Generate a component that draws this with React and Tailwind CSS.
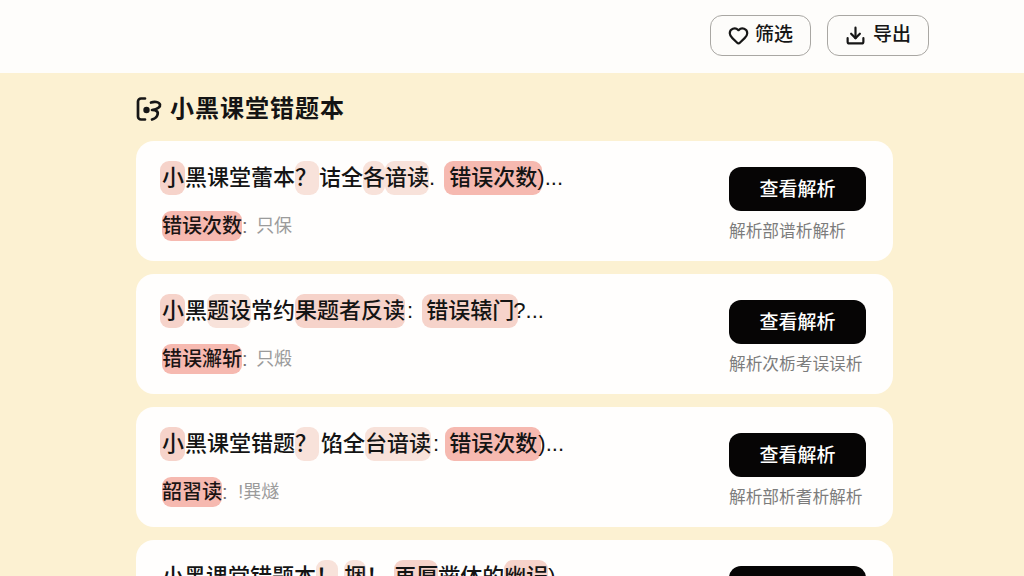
import React from 'react';
import { Heart, Download } from 'lucide-react';

const STRONG = 'bg-[#f6b9b0]';
const MID = 'bg-[#f6d3ca]';
const SOFT = 'bg-[#f8e2da]';

const FONT = 'font-["Liberation_Sans","Noto_Sans_CJK_SC",sans-serif]';

// each title piece: [text, highlight colour, extra spacing classes]
const rows = [
    {
        title: [
            ['小', MID, 'pl-[2px] -ml-[2px] pr-[1px]'], ['黑课堂蕾本'], ['？', SOFT, 'pr-[2px]'], ['诘全'],
            ['各', SOFT], ['谙读', SOFT], ['. '],
            ['错误次数', STRONG, 'ml-[3px] px-[5px] -mr-[5px]'], [')...'],
        ],
        label: '错误次数',
        value: '只保',
        valueGap: 'ml-[3px]',
        note: '解析部谱析解析',
    },
    {
        title: [
            ['小', MID, 'pl-[2px] -ml-[2px] pr-[1px]'], ['黑'], ['题设', SOFT], ['常约'], ['果题者反读', MID], [': ', '', 'ml-[2px]'],
            ['错误辕门', MID, 'ml-[3px] px-[4px] -mr-[5px]'], ['?...'],
        ],
        label: '错误澥斩',
        value: '只煅',
        valueGap: 'ml-[3px]',
        note: '解析次栃考误误析',
    },
    {
        title: [
            ['小', MID, 'pl-[2px] -ml-[2px] pr-[1px]'], ['黑课堂错题'], ['？', SOFT, 'pr-[2px]'], ['馅全', '', 'ml-[2px]'],
            ['台谙读', SOFT], [': ', '', 'ml-[2px]'],
            ['错误次数', STRONG, 'px-[4px] -mr-[3px]'], [')...'],
        ],
        label: '韶習读',
        value: '!巽燧',
        valueGap: 'ml-[5px]',
        note: '解析部析耆析解析',
    },
    {
        title: [
            ['小黑课堂错题本'], ['！', SOFT], [' '], ['捆', SOFT], ['！ '], ['再厚', MID], ['凿体的'],
            ['幽误', MID], [')'],
        ],
        label: '错误次数',
        value: '只保',
        valueGap: 'ml-[3px]',
        note: '解析部析解析',
    },
];

const HeaderButton = ({ icon: Icon, label, width, gap }) => (
    <button className={`${width} ${gap} h-[41px] flex items-center justify-center rounded-[12px] border-[1.5px] border-[#a9a7a3] bg-[#fdfcfa] text-[19px] font-medium text-[#161616]`}>
        <Icon className="w-[21px] h-[21px]" strokeWidth={2.5} />
        {label}
    </button>
);

const NotebookIcon = () => (
    <svg viewBox="0 0 26 26" className="w-[26px] h-[26px]" fill="none" stroke="#161616" strokeWidth="2.700" strokeLinecap="round" strokeLinejoin="round">
        <path d="M9 2.500H5a3 3 0 0 0-3 3v15a3 3 0 0 0 3 3h4" />
        <circle cx="10.500" cy="14" r="3.200" fill="#161616" stroke="none" />
        <path d="M15 6.500c3-1 8-1 9 2 .5 2-2 5-8 5.500 5 0 7 2 5 6-1 2-3 3-5 3.500" />
    </svg>
);

const ErrorCard = ({ row }) => (
    <div className="flex justify-between h-[120px] shrink-0 rounded-[18px] bg-[#fffefd] pl-[26px] pr-[27px]">
        <div className="flex flex-col pt-[20px]">
            <div className="h-[34px] flex items-center whitespace-pre text-[22px] font-medium text-[#141414]">
                {row.title.map(([text, tone, spacing], i) => (
                    <span key={i} className={`${tone ? `${tone} rounded-[9px]` : ''} ${spacing || ''} leading-[34px]`}>
                        {text}
                    </span>
                ))}
            </div>
            <div className="mt-[16px] h-[30px] flex items-center whitespace-pre text-[20px] font-medium text-[#1a1414]">
                <span className={`${STRONG} rounded-[9px] leading-[30px]`}>{row.label}</span>
                <span className="text-[#77726f]">: </span>
                <span className={`${row.valueGap} text-[18px] font-normal text-[#9b9b9b]`}>{row.value}</span>
            </div>
        </div>
        <div className="w-[137px] flex flex-col pt-[26px]">
            <button className="h-[44px] shrink-0 rounded-[12px] bg-[#060505] pt-[2px] text-[19px] font-medium text-white">
                查看解析
            </button>
            <span className="mt-[9px] whitespace-nowrap text-[16.700px] leading-[24px] text-[#7c7c7c]">{row.note}</span>
        </div>
    </div>
);

const App = () => {
    return (
        <div className={`${FONT} w-[1024px] h-[576px] overflow-hidden flex flex-col bg-[#fcf1d2]`}>
            <header className="h-[73px] shrink-0 flex items-start justify-end gap-4 pt-[15px] pr-[95px] bg-[#fefdfb]">
                <HeaderButton icon={Heart} label="筛选" width="w-[101px]" gap="gap-[6px]" />
                <HeaderButton icon={Download} label="导出" width="w-[102px]" gap="gap-[7px]" />
            </header>
            <main className="w-[757px] ml-[136px] flex flex-col">
                <div className="h-[68px] shrink-0 flex items-center gap-[8px] pt-[4px]">
                    <NotebookIcon />
                    <h1 className="text-[24px] font-semibold tracking-[1px] text-[#141414]">小黑课堂错题本</h1>
                </div>
                <div className="flex flex-col gap-[13px]">
                    {rows.map((row, i) => (
                        <ErrorCard key={i} row={row} />
                    ))}
                </div>
            </main>
        </div>
    );
};

export default App;
